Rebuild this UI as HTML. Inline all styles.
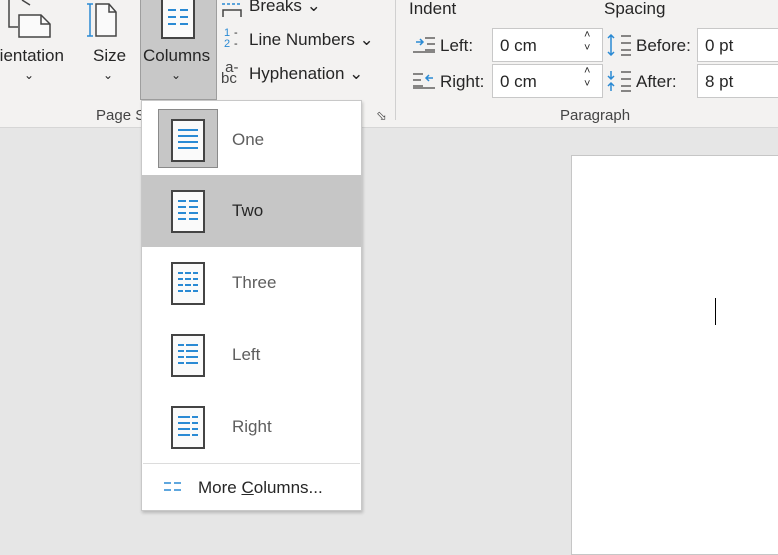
<!DOCTYPE html>
<html><head><meta charset="utf-8"><style>
*{margin:0;padding:0;box-sizing:border-box}
body{width:778px;height:537px;overflow:hidden;background:#e6e6e6;font-family:"Segoe UI","Liberation Sans",sans-serif;color:#262626;position:relative}
.a{position:absolute;white-space:nowrap}
.rib{position:absolute;left:0;top:0;width:778px;height:128px;background:#f3f2f1;border-bottom:1px solid #d6d6d6}
.t{font-size:17px}
.box{position:absolute;background:#fff;border:1px solid #c8c8c8;height:34px;font-size:17px;padding:7px 0 0 7px}
.menu{position:absolute;left:141px;top:100px;width:221px;height:411px;background:#fff;border:1px solid #c8c8c8;box-shadow:1px 2px 3px rgba(0,0,0,.2)}
.it{position:absolute;left:0;width:219px;height:72px}
.it .lb{position:absolute;left:90px;top:26px;font-size:17px;color:#5e5e5e}
.pg{position:absolute;left:29px;top:15px;width:34px;height:43px;border:2px solid #444;background:#fafafa}
</style></head><body>
<div class="rib"></div>
<svg class="a" style="left:0;top:0" width="60" height="40"><path d="M9 0V27h9" fill="none" stroke="#444" stroke-width="1.5"/><path d="M19 15h22l9 9v13H19z" fill="#fafafa" stroke="#444" stroke-width="1.5"/><path d="M41 15v9h9" fill="none" stroke="#444" stroke-width="1.5"/><path d="M22 0l8 5" stroke="#444" stroke-width="1.5"/></svg>
<div class="a t" style="left:-6px;top:46px">rientation</div>
<div class="a" style="left:24px;top:68px;font-size:12px">⌄</div>
<svg class="a" style="left:85px;top:0" width="40" height="40"><path d="M5 4V36M2 4h6M2 36h6" stroke="#2a8ad4" stroke-width="1.5"/><path d="M11 4h13l7 8v24H11z" fill="#fafafa" stroke="#444" stroke-width="1.5"/><path d="M24 4v8h7" fill="none" stroke="#444" stroke-width="1.5"/></svg>
<div class="a t" style="left:93px;top:46px">Size</div>
<div class="a" style="left:103px;top:68px;font-size:12px">⌄</div>
<div class="a" style="left:140px;top:0;width:77px;height:100px;background:#c8c8c8;border:1px solid #9e9e9e;border-top:none"></div>
<svg class="a" style="left:161px;top:0" width="36" height="40"><rect x="1" y="-5" width="32" height="43" fill="#fafafa" stroke="#444" stroke-width="2"/><path d="M7 10h8M19 10h8M7 17h8M19 17h8M7 24h8M19 24h8" stroke="#2a8ad4" stroke-width="2"/></svg>
<div class="a t" style="left:143px;top:46px">Columns</div>
<div class="a" style="left:171px;top:68px;font-size:12px">⌄</div>
<svg class="a" style="left:220px;top:0" width="24" height="18"><path d="M2 4h20" stroke="#2a8ad4" stroke-width="1.5" stroke-dasharray="3 2"/><path d="M3 17V10h18v7" fill="none" stroke="#444" stroke-width="1.5"/></svg>
<div class="a t" style="left:249px;top:-4px">Breaks ⌄</div>
<div class="a" style="left:224px;top:28px;color:#2a8ad4;font-size:11px;line-height:11px">1<br>2</div>
<div class="a" style="left:234px;top:28px;font-size:11px;line-height:11px">-<br>-</div>
<div class="a t" style="left:249px;top:30px">Line Numbers ⌄</div>
<div class="a" style="left:221px;top:62px;font-size:15px;line-height:11px;color:#444">&nbsp;a-<br>bc</div>
<div class="a t" style="left:249px;top:64px">Hyphenation ⌄</div>
<div class="a" style="left:96px;top:107px;font-size:15px;color:#444">Page S</div>
<div class="a" style="left:376px;top:108px;font-size:13px;color:#444">⬂</div>
<div class="a" style="left:395px;top:0;width:1px;height:120px;background:#d0d0d0"></div>
<div class="a t" style="left:409px;top:-1px">Indent</div>
<div class="a t" style="left:604px;top:-1px">Spacing</div>
<svg class="a" style="left:413px;top:36px" width="26" height="18"><path d="M3 6h7M7 3l3 3-3 3" fill="none" stroke="#2a8ad4" stroke-width="1.5"/><path d="M12 2h10M14 8h8M12 14h10M0 16h22" stroke="#444" stroke-width="1.3"/></svg>
<div class="a t" style="left:440px;top:36px">Left:</div>
<div class="box" style="left:492px;top:28px;width:111px">0 cm</div>
<div class="a" style="left:584px;top:29px;font-size:11px;line-height:13px">˄<br>˅</div>
<svg class="a" style="left:413px;top:72px" width="26" height="18"><path d="M20 6h-7M16 3l-3 3 3 3" fill="none" stroke="#2a8ad4" stroke-width="1.5"/><path d="M0 2h10M0 8h8M0 14h10M0 16h22" stroke="#444" stroke-width="1.3"/></svg>
<div class="a t" style="left:440px;top:72px">Right:</div>
<div class="box" style="left:492px;top:64px;width:111px">0 cm</div>
<div class="a" style="left:584px;top:65px;font-size:11px;line-height:13px">˄<br>˅</div>
<svg class="a" style="left:606px;top:34px" width="28" height="22"><path d="M5 1v20M2 4l3-3 3 3M2 18l3 3 3-3" fill="none" stroke="#2a8ad4" stroke-width="1.5"/><path d="M15 2h10M15 9h10M15 16h10M15 21h10" stroke="#444" stroke-width="1.3"/></svg>
<div class="a t" style="left:636px;top:36px">Before:</div>
<div class="box" style="left:697px;top:28px;width:90px">0 pt</div>
<svg class="a" style="left:606px;top:70px" width="28" height="22"><path d="M5 1v8M2 6l3 3 3-3M5 13v8M2 16l3-3 3 3" fill="none" stroke="#2a8ad4" stroke-width="1.5"/><path d="M15 2h10M15 9h10M15 16h10M15 21h10" stroke="#444" stroke-width="1.3"/></svg>
<div class="a t" style="left:636px;top:72px">After:</div>
<div class="box" style="left:697px;top:64px;width:90px">8 pt</div>
<div class="a" style="left:560px;top:107px;font-size:15px;color:#444">Paragraph</div>
<div class="a" style="left:571px;top:155px;width:220px;height:400px;background:#fff;border:1px solid #c6c6c6"></div>
<div class="a" style="left:715px;top:298px;width:1px;height:27px;background:#000"></div>
<div class="menu">
 <div class="it" style="top:3px">
  <div class="a" style="left:16px;top:5px;width:60px;height:59px;background:#c6c6c6;border:1px solid #8a8a8a"></div>
  <div class="pg"><svg width="30" height="39"><path d="M5 9h20M5 15h20M5 21h20M5 27h20" stroke="#2a8ad4" stroke-width="2"/></svg></div>
  <div class="lb">One</div></div>
 <div class="it" style="top:74px;background:#c6c6c6">
  <div class="pg"><svg width="30" height="39"><path d="M5 9h8M16 9h9M5 15h8M16 15h9M5 21h8M16 21h9M5 27h8M16 27h9" stroke="#2a8ad4" stroke-width="2"/></svg></div>
  <div class="lb" style="color:#262626">Two</div></div>
 <div class="it" style="top:146px">
  <div class="pg"><svg width="30" height="39"><path d="M5 9h5M12 9h6M20 9h5M5 15h5M12 15h6M20 15h5M5 21h5M12 21h6M20 21h5M5 27h5M12 27h6M20 27h5" stroke="#2a8ad4" stroke-width="2"/></svg></div>
  <div class="lb">Three</div></div>
 <div class="it" style="top:218px">
  <div class="pg"><svg width="30" height="39"><path d="M5 9h6M13 9h12M5 15h6M13 15h12M5 21h6M13 21h12M5 27h6M13 27h12" stroke="#2a8ad4" stroke-width="2"/></svg></div>
  <div class="lb">Left</div></div>
 <div class="it" style="top:290px">
  <div class="pg"><svg width="30" height="39"><path d="M5 9h12M19 9h6M5 15h12M19 15h6M5 21h12M19 21h6M5 27h12M19 27h6" stroke="#2a8ad4" stroke-width="2"/></svg></div>
  <div class="lb">Right</div></div>
 <div class="a" style="left:1px;top:362px;width:217px;height:1px;background:#dcdcdc"></div>
 <svg class="a" style="left:21px;top:380px" width="20" height="12"><path d="M1 2h7M11 2h7M1 9h7M11 9h7" stroke="#2a8ad4" stroke-width="1.5"/></svg>
 <div class="a" style="left:56px;top:377px;font-size:17px;color:#262626">More <u>C</u>olumns...</div>
</div>
</body></html>
